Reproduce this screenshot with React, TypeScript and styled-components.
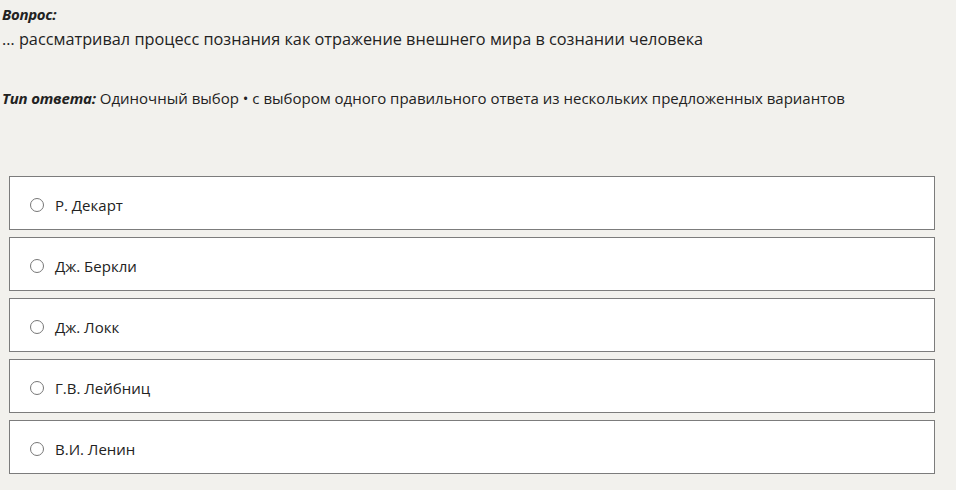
import styled, { createGlobalStyle } from "styled-components";

const GlobalStyle = createGlobalStyle`
  html, body {
    margin: 0;
    padding: 0;
    background: #f2f1ed;
  }
  body {
    font-family: "Open Sans", "Noto Sans", sans-serif;
    color: #222;
  }
`;

const Page = styled.div`
  width: 956px;
  height: 490px;
  padding: 3px 0 0 2px;
  box-sizing: border-box;
`;

const Label = styled.div`
  font-weight: 700;
  font-style: italic;
  font-size: 15px;
  line-height: 22px;
  letter-spacing: -0.3px;
`;

const Text = styled.div`
  font-size: 16.3px;
  line-height: 28px;
`;

const TypeRow = styled.div`
  margin-top: 32px;
  font-size: 15px;
  line-height: 26px;

  b {
    font-style: italic;
    letter-spacing: -0.2px;
  }
`;

const Options = styled.div`
  display: flex;
  flex-direction: column;
  gap: 7px;
  margin: 65px 0 0 7px;
  width: 926px;
`;

const Option = styled.label`
  display: flex;
  align-items: center;
  gap: 11px;
  padding: 3px 0 0 20px;
  height: 49px;
  background: #fff;
  border: 1px solid #7c7c7c;
  font-size: 15px;
  cursor: pointer;
`;

const Radio = styled.span`
  width: 12px;
  height: 12px;
  border: 1px solid #777;
  border-radius: 50%;
  background: #fff;
  flex-shrink: 0;
`;

const answers = ["Р. Декарт", "Дж. Беркли", "Дж. Локк", "Г.В. Лейбниц", "В.И. Ленин"];

const App = () => {
  return (
    <>
      <GlobalStyle />
      <Page>
        <Label>Вопрос:</Label>
        <Text>… рассматривал процесс познания как отражение внешнего мира в сознании человека</Text>
        <TypeRow>
          <b>Тип ответа:</b> Одиночный выбор • с выбором одного правильного ответа из нескольких предложенных вариантов
        </TypeRow>
        <Options>
          {answers.map((a) => (
            <Option key={a}>
              <Radio />
              {a}
            </Option>
          ))}
        </Options>
      </Page>
    </>
  );
};

export default App;
